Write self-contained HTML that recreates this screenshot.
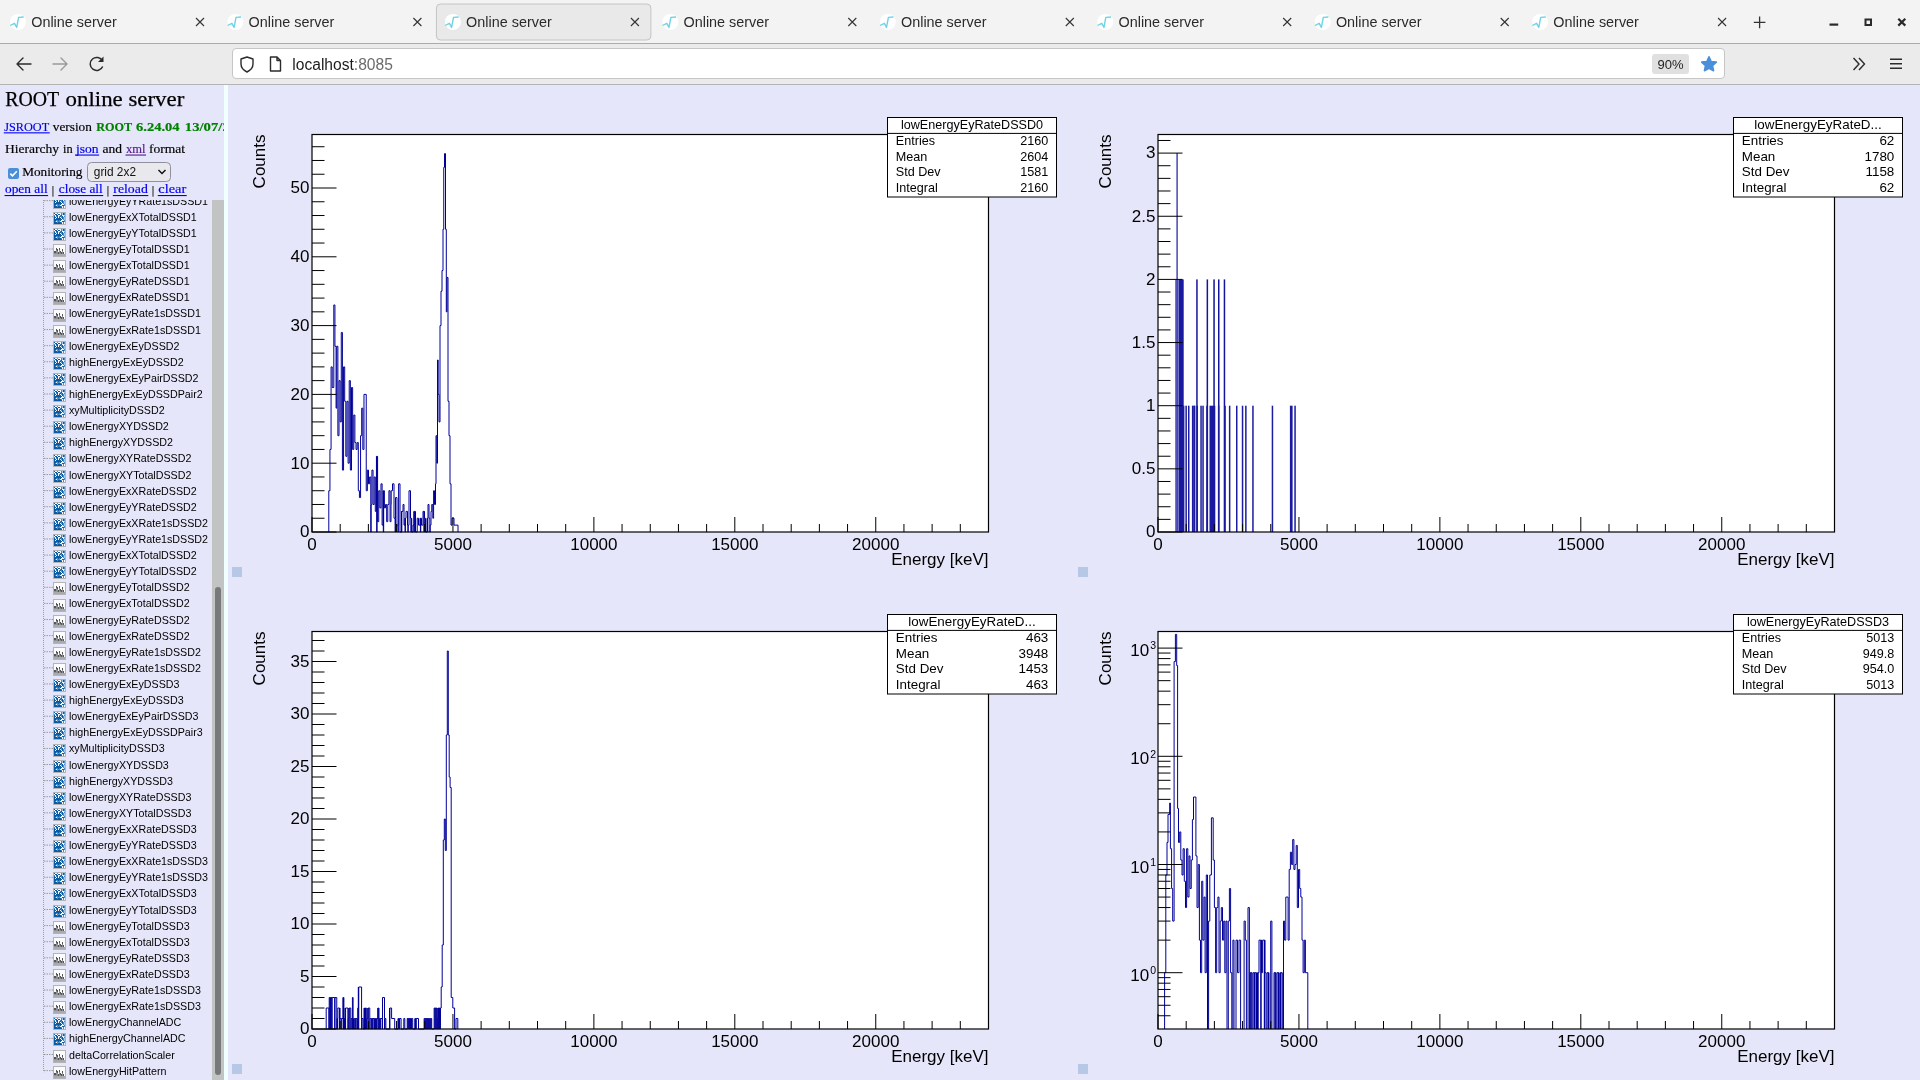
<!DOCTYPE html><html><head><meta charset="utf-8"><title>Online server</title><style>
html,body{margin:0;padding:0;width:1920px;height:1080px;overflow:hidden;background:#e6e6fa;}
body{position:relative;font-family:"Liberation Sans",sans-serif;}
.a{position:absolute;white-space:nowrap;}
#tabbar{position:absolute;left:0;top:0;width:1920px;height:43px;background:#f3f3f3;border-bottom:1px solid #ababab;}
#navbar{position:absolute;left:0;top:44px;width:1920px;height:40px;background:#ebebeb;border-bottom:1px solid #b4b4b4;}
.tabt{position:absolute;top:12.7px;font-size:14.4px;color:#2b2b2b;line-height:18px;}
#url{position:absolute;left:232px;top:48px;width:1491px;height:29px;background:#fff;border:1px solid #c6c6c6;border-radius:4px;}
#left{position:absolute;left:0;top:85px;width:224px;height:995px;overflow:hidden;background:#e6e6fa;font-family:"Liberation Serif",serif;}
#sep{position:absolute;left:224px;top:85px;width:4px;height:995px;background:#f0ffff;}
.ser{font-family:"Liberation Serif",serif;}
a.l{color:#0000ee;text-decoration:underline;}
a.v{color:#551a8b;text-decoration:underline;}
.ti{position:absolute;left:69px;font-size:10.7px;color:#000;line-height:13px;font-family:"Liberation Sans",sans-serif;}
</style></head><body><div id="root" style="position:absolute;left:0;top:0;width:1920px;height:1080px;overflow:hidden;will-change:transform">
<div id="tabbar"></div>
<svg class="a" style="left:0;top:0" width="1920" height="44" viewBox="0 0 1920 44"><rect x="436.4" y="4" width="214.5" height="36" rx="4" ry="4" fill="#e9e9e9" stroke="#c4c4c4" stroke-width="1"/><circle cx="18.0" cy="22" r="8" fill="#fff"/><path d="M10.2,25.5 L14.5,23.3 L16.7,27.4 L18.6,17.4 L23.7,17" fill="none" stroke="#6cd3e8" stroke-width="1.4" stroke-linejoin="round"/><path d="M196.0,18 L204.0,26 M204.0,18 L196.0,26" stroke="#333" stroke-width="1.1"/><circle cx="235.4" cy="22" r="8" fill="#fff"/><path d="M227.6,25.5 L231.9,23.3 L234.1,27.4 L236.0,17.4 L241.1,17" fill="none" stroke="#6cd3e8" stroke-width="1.4" stroke-linejoin="round"/><path d="M413.4,18 L421.4,26 M421.4,18 L413.4,26" stroke="#333" stroke-width="1.1"/><circle cx="452.9" cy="22" r="8" fill="#fff"/><path d="M445.1,25.5 L449.4,23.3 L451.6,27.4 L453.5,17.4 L458.6,17" fill="none" stroke="#6cd3e8" stroke-width="1.4" stroke-linejoin="round"/><path d="M630.9,18 L638.9,26 M638.9,18 L630.9,26" stroke="#333" stroke-width="1.1"/><circle cx="670.3" cy="22" r="8" fill="#fff"/><path d="M662.5,25.5 L666.8,23.3 L669.0,27.4 L670.9,17.4 L676.0,17" fill="none" stroke="#6cd3e8" stroke-width="1.4" stroke-linejoin="round"/><path d="M848.3,18 L856.3,26 M856.3,18 L848.3,26" stroke="#333" stroke-width="1.1"/><circle cx="887.8" cy="22" r="8" fill="#fff"/><path d="M880.0,25.5 L884.3,23.3 L886.5,27.4 L888.4,17.4 L893.5,17" fill="none" stroke="#6cd3e8" stroke-width="1.4" stroke-linejoin="round"/><path d="M1065.8,18 L1073.8,26 M1073.8,18 L1065.8,26" stroke="#333" stroke-width="1.1"/><circle cx="1105.2" cy="22" r="8" fill="#fff"/><path d="M1097.5,25.5 L1101.8,23.3 L1104.0,27.4 L1105.8,17.4 L1111.0,17" fill="none" stroke="#6cd3e8" stroke-width="1.4" stroke-linejoin="round"/><path d="M1283.2,18 L1291.2,26 M1291.2,18 L1283.2,26" stroke="#333" stroke-width="1.1"/><circle cx="1322.7" cy="22" r="8" fill="#fff"/><path d="M1314.9,25.5 L1319.2,23.3 L1321.4,27.4 L1323.3,17.4 L1328.4,17" fill="none" stroke="#6cd3e8" stroke-width="1.4" stroke-linejoin="round"/><path d="M1500.7,18 L1508.7,26 M1508.7,18 L1500.7,26" stroke="#333" stroke-width="1.1"/><circle cx="1540.1" cy="22" r="8" fill="#fff"/><path d="M1532.3,25.5 L1536.6,23.3 L1538.8,27.4 L1540.7,17.4 L1545.8,17" fill="none" stroke="#6cd3e8" stroke-width="1.4" stroke-linejoin="round"/><path d="M1718.1,18 L1726.1,26 M1726.1,18 L1718.1,26" stroke="#333" stroke-width="1.1"/><path d="M1753.8,22.4 H1765.4 M1759.6,16.6 V28.2" stroke="#333" stroke-width="1.3"/><rect x="1829.5" y="23.5" width="8.7" height="2.2" fill="#2a2a2a"/><rect x="1865.5" y="19.5" width="5.5" height="5.5" fill="none" stroke="#2a2a2a" stroke-width="2"/><path d="M1898.3,18.8 L1905.3,25.6 M1905.3,18.8 L1898.3,25.6" stroke="#2a2a2a" stroke-width="2.2"/></svg>
<div class="tabt" style="left:31.2px">Online server</div>
<div class="tabt" style="left:248.6px">Online server</div>
<div class="tabt" style="left:466.1px">Online server</div>
<div class="tabt" style="left:683.5px">Online server</div>
<div class="tabt" style="left:901.0px">Online server</div>
<div class="tabt" style="left:1118.5px">Online server</div>
<div class="tabt" style="left:1335.9px">Online server</div>
<div class="tabt" style="left:1553.3px">Online server</div>
<div id="navbar"></div>
<div id="url"></div>
<svg class="a" style="left:0;top:44px" width="1920" height="41" viewBox="0 44 1920 41"><path d="M17,64 H31 M17,64 L23,58 M17,64 L23,70" fill="none" stroke="#2b2b2b" stroke-width="1.4" stroke-linecap="round"/><path d="M53,64 H67 M67,64 L61,58 M67,64 L61,70" fill="none" stroke="#9a9a9a" stroke-width="1.4" stroke-linecap="round"/><path d="M102.5,61 A6.5,6.5 0 1 0 102.7,66.5" fill="none" stroke="#2b2b2b" stroke-width="1.5"/><path d="M103.5,56.5 L103.5,62 L98,62 Z" fill="#2b2b2b"/><path d="M247,57 L253,59 L253,64 Q253,69 247,72 Q241,69 241,64 L241,59 Z" fill="none" stroke="#2b2b2b" stroke-width="1.4" stroke-linejoin="round"/><path d="M270.5,57 H277 L280.5,60.5 V71 H270.5 Z M277,57 V60.5 H280.5" fill="none" stroke="#2b2b2b" stroke-width="1.4" stroke-linejoin="round"/><rect x="1652" y="54" width="37" height="20" rx="3" fill="#e0e0e0"/><polygon points="1709.00,56.80 1711.17,61.51 1716.32,62.12 1712.52,65.64 1713.53,70.73 1709.00,68.20 1704.47,70.73 1705.48,65.64 1701.68,62.12 1706.83,61.51" fill="#4a8fd9" stroke="#4a8fd9" stroke-width="1.6" stroke-linejoin="round"/><path d="M1853.5,58 L1859,64 L1853.5,70 M1859,58 L1864.5,64 L1859,70" fill="none" stroke="#2b2b2b" stroke-width="1.4"/><path d="M1890,59.2 H1902 M1890,63.7 H1902 M1890,68.2 H1902" stroke="#2b2b2b" stroke-width="1.4"/></svg>
<div class="a" style="left:292.3px;top:55.5px;font-size:15.6px;line-height:18px;color:#1c1c1c">localhost<span style="color:#6b6b6b">:8085</span></div>
<div class="a" style="left:1652px;top:56px;width:37px;text-align:center;font-size:13px;line-height:18px;color:#222">90%</div>
<div id="left">
<svg class="a" style="left:0;top:-85px" width="224" height="200" viewBox="0 0 224 200"><text x="5.3" y="105.8" font-family="Liberation Serif" font-size="21.8" fill="#000" stroke="#000" stroke-width="0.25" textLength="53.9" lengthAdjust="spacingAndGlyphs">ROOT</text><text x="65.6" y="105.8" font-family="Liberation Serif" font-size="21.8" fill="#000" stroke="#000" stroke-width="0.25" textLength="118.7" lengthAdjust="spacingAndGlyphs">online server</text><text x="4.3" y="130.7" font-family="Liberation Serif" font-size="13.2" fill="#0000ee" stroke="#0000ee" stroke-width="0.18" textLength="44.9" lengthAdjust="spacingAndGlyphs">JSROOT</text><rect x="3.8" y="132.30" width="45.9" height="1.1" fill="#0000ee"/><text x="52.8" y="130.7" font-family="Liberation Serif" font-size="13.2" fill="#000" stroke="#000" stroke-width="0.18" textLength="39.1" lengthAdjust="spacingAndGlyphs">version</text><text x="96.2" y="130.7" font-family="Liberation Serif" font-size="13.2" fill="#008000" stroke="#008000" stroke-width="0.18" textLength="36.0" lengthAdjust="spacingAndGlyphs" font-weight="bold">ROOT</text><text x="136" y="130.7" font-family="Liberation Serif" font-size="13.2" fill="#008000" stroke="#008000" stroke-width="0.18" textLength="43.6" lengthAdjust="spacingAndGlyphs" font-weight="bold">6.24.04</text><text x="184.8" y="130.7" font-family="Liberation Serif" font-size="13.2" fill="#008000" stroke="#008000" stroke-width="0.18" textLength="67.0" lengthAdjust="spacingAndGlyphs" font-weight="bold">13/07/2021</text><text x="5.0" y="152.9" font-family="Liberation Serif" font-size="13.2" fill="#000" stroke="#000" stroke-width="0.18" textLength="54.0" lengthAdjust="spacingAndGlyphs">Hierarchy</text><text x="63.0" y="152.9" font-family="Liberation Serif" font-size="13.2" fill="#000" stroke="#000" stroke-width="0.18" textLength="9.6" lengthAdjust="spacingAndGlyphs">in</text><text x="76.0" y="152.9" font-family="Liberation Serif" font-size="13.2" fill="#0000ee" stroke="#0000ee" stroke-width="0.18" textLength="22.6" lengthAdjust="spacingAndGlyphs">json</text><rect x="75.5" y="154.50" width="23.6" height="1.1" fill="#0000ee"/><text x="102.6" y="152.9" font-family="Liberation Serif" font-size="13.2" fill="#000" stroke="#000" stroke-width="0.18" textLength="19.5" lengthAdjust="spacingAndGlyphs">and</text><text x="126.0" y="152.9" font-family="Liberation Serif" font-size="13.2" fill="#551a8b" stroke="#551a8b" stroke-width="0.18" textLength="19.5" lengthAdjust="spacingAndGlyphs">xml</text><rect x="125.5" y="154.50" width="20.5" height="1.1" fill="#551a8b"/><text x="149.0" y="152.9" font-family="Liberation Serif" font-size="13.2" fill="#000" stroke="#000" stroke-width="0.18" textLength="36.1" lengthAdjust="spacingAndGlyphs">format</text><text x="22.2" y="175.6" font-family="Liberation Serif" font-size="13.2" fill="#000" stroke="#000" stroke-width="0.18" textLength="60.3" lengthAdjust="spacingAndGlyphs">Monitoring</text><text x="5.0" y="193.4" font-family="Liberation Serif" font-size="13.2" fill="#0000ee" stroke="#0000ee" stroke-width="0.18" textLength="42.6" lengthAdjust="spacingAndGlyphs">open all</text><rect x="4.5" y="195.00" width="43.6" height="1.1" fill="#0000ee"/><text x="58.8" y="193.4" font-family="Liberation Serif" font-size="13.2" fill="#0000ee" stroke="#0000ee" stroke-width="0.18" textLength="43.9" lengthAdjust="spacingAndGlyphs">close all</text><rect x="58.3" y="195.00" width="44.9" height="1.1" fill="#0000ee"/><text x="113.3" y="193.4" font-family="Liberation Serif" font-size="13.2" fill="#0000ee" stroke="#0000ee" stroke-width="0.18" textLength="34.5" lengthAdjust="spacingAndGlyphs">reload</text><rect x="112.8" y="195.00" width="35.5" height="1.1" fill="#0000ee"/><text x="158.3" y="193.4" font-family="Liberation Serif" font-size="13.2" fill="#0000ee" stroke="#0000ee" stroke-width="0.18" textLength="27.9" lengthAdjust="spacingAndGlyphs">clear</text><rect x="157.8" y="195.00" width="28.9" height="1.1" fill="#0000ee"/><rect x="52.1" y="186" width="1.6" height="10.7" fill="#6e6e6e"/><rect x="107.10000000000001" y="186" width="1.6" height="10.7" fill="#6e6e6e"/><rect x="152.2" y="186" width="1.6" height="10.7" fill="#6e6e6e"/><rect x="8" y="168" width="11" height="11" rx="2" fill="#4a90d9"/><path d="M10.3,173.6 L12.5,175.9 L16.8,171.2" fill="none" stroke="#fff" stroke-width="1.6"/><rect x="87.5" y="162.5" width="83" height="19" rx="4" fill="#e9e9ed" stroke="#8f8f9d" stroke-width="1"/><text x="93.8" y="175.6" font-family="Liberation Sans" font-size="13" fill="#111" textLength="42.2" lengthAdjust="spacingAndGlyphs">grid 2x2</text><path d="M158.5,170 L162,173.6 L165.5,170" fill="none" stroke="#111" stroke-width="1.4"/></svg>
<div class="a" style="left:0;top:115px;width:224px;height:880px;overflow:hidden"><svg class="a" style="left:0;top:0" width="224" height="880"><defs><symbol id="ib" viewBox="0 0 13 13"><rect x="0.5" y="0.5" width="12" height="12" fill="#f5f9fd" stroke="#b0b4b8" stroke-width="1"/><rect x="1" y="1" width="1" height="1" fill="#0c5aa0"/><rect x="4" y="1" width="1" height="1" fill="#4a8cc4"/><rect x="8" y="1" width="1" height="1" fill="#4a8cc4"/><rect x="9" y="1" width="1" height="1" fill="#a6c6e3"/><rect x="10" y="1" width="1" height="1" fill="#0c5aa0"/><rect x="11" y="1" width="1" height="1" fill="#4a8cc4"/><rect x="2" y="2" width="1" height="1" fill="#0c5aa0"/><rect x="3" y="2" width="1" height="1" fill="#0c5aa0"/><rect x="5" y="2" width="1" height="1" fill="#0c5aa0"/><rect x="6" y="2" width="1" height="1" fill="#0c5aa0"/><rect x="8" y="2" width="1" height="1" fill="#4a8cc4"/><rect x="9" y="2" width="1" height="1" fill="#a6c6e3"/><rect x="10" y="2" width="1" height="1" fill="#0c5aa0"/><rect x="11" y="2" width="1" height="1" fill="#4a8cc4"/><rect x="1" y="3" width="1" height="1" fill="#4a8cc4"/><rect x="3" y="3" width="1" height="1" fill="#0c5aa0"/><rect x="4" y="3" width="1" height="1" fill="#0c5aa0"/><rect x="7" y="3" width="1" height="1" fill="#4a8cc4"/><rect x="8" y="3" width="1" height="1" fill="#0c5aa0"/><rect x="11" y="3" width="1" height="1" fill="#a6c6e3"/><rect x="1" y="4" width="1" height="1" fill="#0c5aa0"/><rect x="3" y="4" width="1" height="1" fill="#4a8cc4"/><rect x="4" y="4" width="1" height="1" fill="#0c5aa0"/><rect x="6" y="4" width="1" height="1" fill="#4a8cc4"/><rect x="7" y="4" width="1" height="1" fill="#0c5aa0"/><rect x="8" y="4" width="1" height="1" fill="#4a8cc4"/><rect x="9" y="4" width="1" height="1" fill="#0c5aa0"/><rect x="11" y="4" width="1" height="1" fill="#4a8cc4"/><rect x="1" y="5" width="1" height="1" fill="#0c5aa0"/><rect x="2" y="5" width="1" height="1" fill="#0c5aa0"/><rect x="4" y="5" width="1" height="1" fill="#0c5aa0"/><rect x="6" y="5" width="1" height="1" fill="#0c5aa0"/><rect x="8" y="5" width="1" height="1" fill="#4a8cc4"/><rect x="9" y="5" width="1" height="1" fill="#0c5aa0"/><rect x="10" y="5" width="1" height="1" fill="#4a8cc4"/><rect x="11" y="5" width="1" height="1" fill="#a6c6e3"/><rect x="1" y="6" width="1" height="1" fill="#0c5aa0"/><rect x="3" y="6" width="1" height="1" fill="#0c5aa0"/><rect x="4" y="6" width="1" height="1" fill="#0c5aa0"/><rect x="5" y="6" width="1" height="1" fill="#0c5aa0"/><rect x="6" y="6" width="1" height="1" fill="#0c5aa0"/><rect x="7" y="6" width="1" height="1" fill="#0c5aa0"/><rect x="9" y="6" width="1" height="1" fill="#0c5aa0"/><rect x="10" y="6" width="1" height="1" fill="#4a8cc4"/><rect x="11" y="6" width="1" height="1" fill="#a6c6e3"/><rect x="1" y="7" width="1" height="1" fill="#0c5aa0"/><rect x="2" y="7" width="1" height="1" fill="#0c5aa0"/><rect x="3" y="7" width="1" height="1" fill="#0c5aa0"/><rect x="4" y="7" width="1" height="1" fill="#0c5aa0"/><rect x="5" y="7" width="1" height="1" fill="#0c5aa0"/><rect x="6" y="7" width="1" height="1" fill="#0c5aa0"/><rect x="7" y="7" width="1" height="1" fill="#0c5aa0"/><rect x="8" y="7" width="1" height="1" fill="#0c5aa0"/><rect x="10" y="7" width="1" height="1" fill="#4a8cc4"/><rect x="11" y="7" width="1" height="1" fill="#a6c6e3"/><rect x="1" y="8" width="1" height="1" fill="#0c5aa0"/><rect x="2" y="8" width="1" height="1" fill="#0c5aa0"/><rect x="3" y="8" width="1" height="1" fill="#4a8cc4"/><rect x="4" y="8" width="1" height="1" fill="#4a8cc4"/><rect x="5" y="8" width="1" height="1" fill="#0c5aa0"/><rect x="6" y="8" width="1" height="1" fill="#4a8cc4"/><rect x="7" y="8" width="1" height="1" fill="#0c5aa0"/><rect x="11" y="8" width="1" height="1" fill="#4a8cc4"/><rect x="1" y="9" width="1" height="1" fill="#0c5aa0"/><rect x="2" y="9" width="1" height="1" fill="#4a8cc4"/><rect x="4" y="9" width="1" height="1" fill="#4a8cc4"/><rect x="5" y="9" width="1" height="1" fill="#4a8cc4"/><rect x="6" y="9" width="1" height="1" fill="#4a8cc4"/><rect x="9" y="9" width="1" height="1" fill="#0c5aa0"/><rect x="10" y="9" width="1" height="1" fill="#0c5aa0"/><rect x="11" y="9" width="1" height="1" fill="#4a8cc4"/><rect x="1" y="10" width="1" height="1" fill="#0c5aa0"/><rect x="2" y="10" width="1" height="1" fill="#0c5aa0"/><rect x="3" y="10" width="1" height="1" fill="#0c5aa0"/><rect x="4" y="10" width="1" height="1" fill="#4a8cc4"/><rect x="5" y="10" width="1" height="1" fill="#0c5aa0"/><rect x="6" y="10" width="1" height="1" fill="#0c5aa0"/><rect x="7" y="10" width="1" height="1" fill="#0c5aa0"/><rect x="8" y="10" width="1" height="1" fill="#4a8cc4"/><rect x="10" y="10" width="1" height="1" fill="#4a8cc4"/><rect x="1" y="11" width="1" height="1" fill="#0c5aa0"/><rect x="2" y="11" width="1" height="1" fill="#0c5aa0"/><rect x="3" y="11" width="1" height="1" fill="#0c5aa0"/><rect x="4" y="11" width="1" height="1" fill="#0c5aa0"/><rect x="5" y="11" width="1" height="1" fill="#0c5aa0"/><rect x="6" y="11" width="1" height="1" fill="#0c5aa0"/><rect x="7" y="11" width="1" height="1" fill="#0c5aa0"/><rect x="8" y="11" width="1" height="1" fill="#0c5aa0"/><rect x="10" y="11" width="1" height="1" fill="#4a8cc4"/></symbol><symbol id="ig" viewBox="0 0 13 13"><rect x="0.5" y="0.5" width="12" height="12" fill="#fbfbfb" stroke="#b4b4b4" stroke-width="1"/><rect x="1" y="7" width="1" height="5" fill="#8e9094"/><rect x="1" y="7" width="1" height="2" fill="#55565a"/><rect x="2" y="7" width="1" height="5" fill="#8e9094"/><rect x="2" y="7" width="1" height="2" fill="#55565a"/><rect x="3" y="4" width="1" height="8" fill="#8e9094"/><rect x="3" y="4" width="1" height="2" fill="#55565a"/><rect x="4" y="5" width="1" height="7" fill="#8e9094"/><rect x="4" y="5" width="1" height="2" fill="#55565a"/><rect x="5" y="8" width="1" height="4" fill="#8e9094"/><rect x="5" y="8" width="1" height="2" fill="#55565a"/><rect x="6" y="4" width="1" height="8" fill="#8e9094"/><rect x="6" y="4" width="1" height="2" fill="#55565a"/><rect x="7" y="7" width="1" height="5" fill="#8e9094"/><rect x="7" y="7" width="1" height="2" fill="#55565a"/><rect x="8" y="8" width="1" height="4" fill="#8e9094"/><rect x="8" y="8" width="1" height="2" fill="#55565a"/><rect x="9" y="5" width="1" height="7" fill="#8e9094"/><rect x="9" y="5" width="1" height="2" fill="#55565a"/><rect x="10" y="8" width="1" height="4" fill="#8e9094"/><rect x="10" y="8" width="1" height="2" fill="#55565a"/><rect x="11" y="10" width="1" height="2" fill="#8e9094"/><rect x="11" y="10" width="1" height="2" fill="#55565a"/><rect x="1" y="10" width="11" height="2" fill="#a8aaae"/></symbol></defs><line x1="43.5" y1="0" x2="43.5" y2="872.2" stroke="#9c9c9c" stroke-width="1" stroke-dasharray="1,1"/><line x1="44" y1="0.67" x2="53" y2="0.67" stroke="#9a9a9a" stroke-width="1" stroke-dasharray="1.5,1"/><use href="#ib" x="53" y="-4.00" width="13" height="13"/><line x1="44" y1="16.78" x2="53" y2="16.78" stroke="#9a9a9a" stroke-width="1" stroke-dasharray="1.5,1"/><use href="#ib" x="53" y="12.00" width="13" height="13"/><line x1="44" y1="32.89" x2="53" y2="32.89" stroke="#9a9a9a" stroke-width="1" stroke-dasharray="1.5,1"/><use href="#ib" x="53" y="28.00" width="13" height="13"/><line x1="44" y1="49.00" x2="53" y2="49.00" stroke="#9a9a9a" stroke-width="1" stroke-dasharray="1.5,1"/><use href="#ig" x="53" y="44.00" width="13" height="13"/><line x1="44" y1="65.11" x2="53" y2="65.11" stroke="#9a9a9a" stroke-width="1" stroke-dasharray="1.5,1"/><use href="#ig" x="53" y="60.00" width="13" height="13"/><line x1="44" y1="81.22" x2="53" y2="81.22" stroke="#9a9a9a" stroke-width="1" stroke-dasharray="1.5,1"/><use href="#ig" x="53" y="76.00" width="13" height="13"/><line x1="44" y1="97.33" x2="53" y2="97.33" stroke="#9a9a9a" stroke-width="1" stroke-dasharray="1.5,1"/><use href="#ig" x="53" y="92.00" width="13" height="13"/><line x1="44" y1="113.44" x2="53" y2="113.44" stroke="#9a9a9a" stroke-width="1" stroke-dasharray="1.5,1"/><use href="#ig" x="53" y="109.00" width="13" height="13"/><line x1="44" y1="129.55" x2="53" y2="129.55" stroke="#9a9a9a" stroke-width="1" stroke-dasharray="1.5,1"/><use href="#ig" x="53" y="125.00" width="13" height="13"/><line x1="44" y1="145.66" x2="53" y2="145.66" stroke="#9a9a9a" stroke-width="1" stroke-dasharray="1.5,1"/><use href="#ib" x="53" y="141.00" width="13" height="13"/><line x1="44" y1="161.77" x2="53" y2="161.77" stroke="#9a9a9a" stroke-width="1" stroke-dasharray="1.5,1"/><use href="#ib" x="53" y="157.00" width="13" height="13"/><line x1="44" y1="177.88" x2="53" y2="177.88" stroke="#9a9a9a" stroke-width="1" stroke-dasharray="1.5,1"/><use href="#ib" x="53" y="173.00" width="13" height="13"/><line x1="44" y1="193.99" x2="53" y2="193.99" stroke="#9a9a9a" stroke-width="1" stroke-dasharray="1.5,1"/><use href="#ib" x="53" y="189.00" width="13" height="13"/><line x1="44" y1="210.10" x2="53" y2="210.10" stroke="#9a9a9a" stroke-width="1" stroke-dasharray="1.5,1"/><use href="#ib" x="53" y="205.00" width="13" height="13"/><line x1="44" y1="226.21" x2="53" y2="226.21" stroke="#9a9a9a" stroke-width="1" stroke-dasharray="1.5,1"/><use href="#ib" x="53" y="221.00" width="13" height="13"/><line x1="44" y1="242.32" x2="53" y2="242.32" stroke="#9a9a9a" stroke-width="1" stroke-dasharray="1.5,1"/><use href="#ib" x="53" y="237.00" width="13" height="13"/><line x1="44" y1="258.43" x2="53" y2="258.43" stroke="#9a9a9a" stroke-width="1" stroke-dasharray="1.5,1"/><use href="#ib" x="53" y="254.00" width="13" height="13"/><line x1="44" y1="274.54" x2="53" y2="274.54" stroke="#9a9a9a" stroke-width="1" stroke-dasharray="1.5,1"/><use href="#ib" x="53" y="270.00" width="13" height="13"/><line x1="44" y1="290.65" x2="53" y2="290.65" stroke="#9a9a9a" stroke-width="1" stroke-dasharray="1.5,1"/><use href="#ib" x="53" y="286.00" width="13" height="13"/><line x1="44" y1="306.76" x2="53" y2="306.76" stroke="#9a9a9a" stroke-width="1" stroke-dasharray="1.5,1"/><use href="#ib" x="53" y="302.00" width="13" height="13"/><line x1="44" y1="322.87" x2="53" y2="322.87" stroke="#9a9a9a" stroke-width="1" stroke-dasharray="1.5,1"/><use href="#ib" x="53" y="318.00" width="13" height="13"/><line x1="44" y1="338.98" x2="53" y2="338.98" stroke="#9a9a9a" stroke-width="1" stroke-dasharray="1.5,1"/><use href="#ib" x="53" y="334.00" width="13" height="13"/><line x1="44" y1="355.09" x2="53" y2="355.09" stroke="#9a9a9a" stroke-width="1" stroke-dasharray="1.5,1"/><use href="#ib" x="53" y="350.00" width="13" height="13"/><line x1="44" y1="371.20" x2="53" y2="371.20" stroke="#9a9a9a" stroke-width="1" stroke-dasharray="1.5,1"/><use href="#ib" x="53" y="366.00" width="13" height="13"/><line x1="44" y1="387.31" x2="53" y2="387.31" stroke="#9a9a9a" stroke-width="1" stroke-dasharray="1.5,1"/><use href="#ig" x="53" y="382.00" width="13" height="13"/><line x1="44" y1="403.42" x2="53" y2="403.42" stroke="#9a9a9a" stroke-width="1" stroke-dasharray="1.5,1"/><use href="#ig" x="53" y="399.00" width="13" height="13"/><line x1="44" y1="419.53" x2="53" y2="419.53" stroke="#9a9a9a" stroke-width="1" stroke-dasharray="1.5,1"/><use href="#ig" x="53" y="415.00" width="13" height="13"/><line x1="44" y1="435.64" x2="53" y2="435.64" stroke="#9a9a9a" stroke-width="1" stroke-dasharray="1.5,1"/><use href="#ig" x="53" y="431.00" width="13" height="13"/><line x1="44" y1="451.75" x2="53" y2="451.75" stroke="#9a9a9a" stroke-width="1" stroke-dasharray="1.5,1"/><use href="#ig" x="53" y="447.00" width="13" height="13"/><line x1="44" y1="467.86" x2="53" y2="467.86" stroke="#9a9a9a" stroke-width="1" stroke-dasharray="1.5,1"/><use href="#ig" x="53" y="463.00" width="13" height="13"/><line x1="44" y1="483.97" x2="53" y2="483.97" stroke="#9a9a9a" stroke-width="1" stroke-dasharray="1.5,1"/><use href="#ib" x="53" y="479.00" width="13" height="13"/><line x1="44" y1="500.08" x2="53" y2="500.08" stroke="#9a9a9a" stroke-width="1" stroke-dasharray="1.5,1"/><use href="#ib" x="53" y="495.00" width="13" height="13"/><line x1="44" y1="516.19" x2="53" y2="516.19" stroke="#9a9a9a" stroke-width="1" stroke-dasharray="1.5,1"/><use href="#ib" x="53" y="511.00" width="13" height="13"/><line x1="44" y1="532.30" x2="53" y2="532.30" stroke="#9a9a9a" stroke-width="1" stroke-dasharray="1.5,1"/><use href="#ib" x="53" y="527.00" width="13" height="13"/><line x1="44" y1="548.41" x2="53" y2="548.41" stroke="#9a9a9a" stroke-width="1" stroke-dasharray="1.5,1"/><use href="#ib" x="53" y="544.00" width="13" height="13"/><line x1="44" y1="564.52" x2="53" y2="564.52" stroke="#9a9a9a" stroke-width="1" stroke-dasharray="1.5,1"/><use href="#ib" x="53" y="560.00" width="13" height="13"/><line x1="44" y1="580.63" x2="53" y2="580.63" stroke="#9a9a9a" stroke-width="1" stroke-dasharray="1.5,1"/><use href="#ib" x="53" y="576.00" width="13" height="13"/><line x1="44" y1="596.74" x2="53" y2="596.74" stroke="#9a9a9a" stroke-width="1" stroke-dasharray="1.5,1"/><use href="#ib" x="53" y="592.00" width="13" height="13"/><line x1="44" y1="612.85" x2="53" y2="612.85" stroke="#9a9a9a" stroke-width="1" stroke-dasharray="1.5,1"/><use href="#ib" x="53" y="608.00" width="13" height="13"/><line x1="44" y1="628.96" x2="53" y2="628.96" stroke="#9a9a9a" stroke-width="1" stroke-dasharray="1.5,1"/><use href="#ib" x="53" y="624.00" width="13" height="13"/><line x1="44" y1="645.07" x2="53" y2="645.07" stroke="#9a9a9a" stroke-width="1" stroke-dasharray="1.5,1"/><use href="#ib" x="53" y="640.00" width="13" height="13"/><line x1="44" y1="661.18" x2="53" y2="661.18" stroke="#9a9a9a" stroke-width="1" stroke-dasharray="1.5,1"/><use href="#ib" x="53" y="656.00" width="13" height="13"/><line x1="44" y1="677.29" x2="53" y2="677.29" stroke="#9a9a9a" stroke-width="1" stroke-dasharray="1.5,1"/><use href="#ib" x="53" y="672.00" width="13" height="13"/><line x1="44" y1="693.40" x2="53" y2="693.40" stroke="#9a9a9a" stroke-width="1" stroke-dasharray="1.5,1"/><use href="#ib" x="53" y="688.00" width="13" height="13"/><line x1="44" y1="709.51" x2="53" y2="709.51" stroke="#9a9a9a" stroke-width="1" stroke-dasharray="1.5,1"/><use href="#ib" x="53" y="705.00" width="13" height="13"/><line x1="44" y1="725.62" x2="53" y2="725.62" stroke="#9a9a9a" stroke-width="1" stroke-dasharray="1.5,1"/><use href="#ig" x="53" y="721.00" width="13" height="13"/><line x1="44" y1="741.73" x2="53" y2="741.73" stroke="#9a9a9a" stroke-width="1" stroke-dasharray="1.5,1"/><use href="#ig" x="53" y="737.00" width="13" height="13"/><line x1="44" y1="757.84" x2="53" y2="757.84" stroke="#9a9a9a" stroke-width="1" stroke-dasharray="1.5,1"/><use href="#ig" x="53" y="753.00" width="13" height="13"/><line x1="44" y1="773.95" x2="53" y2="773.95" stroke="#9a9a9a" stroke-width="1" stroke-dasharray="1.5,1"/><use href="#ig" x="53" y="769.00" width="13" height="13"/><line x1="44" y1="790.06" x2="53" y2="790.06" stroke="#9a9a9a" stroke-width="1" stroke-dasharray="1.5,1"/><use href="#ig" x="53" y="785.00" width="13" height="13"/><line x1="44" y1="806.17" x2="53" y2="806.17" stroke="#9a9a9a" stroke-width="1" stroke-dasharray="1.5,1"/><use href="#ig" x="53" y="801.00" width="13" height="13"/><line x1="44" y1="822.28" x2="53" y2="822.28" stroke="#9a9a9a" stroke-width="1" stroke-dasharray="1.5,1"/><use href="#ib" x="53" y="817.00" width="13" height="13"/><line x1="44" y1="838.39" x2="53" y2="838.39" stroke="#9a9a9a" stroke-width="1" stroke-dasharray="1.5,1"/><use href="#ib" x="53" y="833.00" width="13" height="13"/><line x1="44" y1="854.50" x2="53" y2="854.50" stroke="#9a9a9a" stroke-width="1" stroke-dasharray="1.5,1"/><use href="#ig" x="53" y="850.00" width="13" height="13"/><line x1="44" y1="870.61" x2="53" y2="870.61" stroke="#9a9a9a" stroke-width="1" stroke-dasharray="1.5,1"/><use href="#ig" x="53" y="866.00" width="13" height="13"/></svg><div class="ti" style="top:-5.33px">lowEnergyEyYRate1sDSSD1</div><div class="ti" style="top:10.78px">lowEnergyExXTotalDSSD1</div><div class="ti" style="top:26.89px">lowEnergyEyYTotalDSSD1</div><div class="ti" style="top:43.00px">lowEnergyEyTotalDSSD1</div><div class="ti" style="top:59.11px">lowEnergyExTotalDSSD1</div><div class="ti" style="top:75.22px">lowEnergyEyRateDSSD1</div><div class="ti" style="top:91.33px">lowEnergyExRateDSSD1</div><div class="ti" style="top:107.44px">lowEnergyEyRate1sDSSD1</div><div class="ti" style="top:123.55px">lowEnergyExRate1sDSSD1</div><div class="ti" style="top:139.66px">lowEnergyExEyDSSD2</div><div class="ti" style="top:155.77px">highEnergyExEyDSSD2</div><div class="ti" style="top:171.88px">lowEnergyExEyPairDSSD2</div><div class="ti" style="top:187.99px">highEnergyExEyDSSDPair2</div><div class="ti" style="top:204.10px">xyMultiplicityDSSD2</div><div class="ti" style="top:220.21px">lowEnergyXYDSSD2</div><div class="ti" style="top:236.32px">highEnergyXYDSSD2</div><div class="ti" style="top:252.43px">lowEnergyXYRateDSSD2</div><div class="ti" style="top:268.54px">lowEnergyXYTotalDSSD2</div><div class="ti" style="top:284.65px">lowEnergyExXRateDSSD2</div><div class="ti" style="top:300.76px">lowEnergyEyYRateDSSD2</div><div class="ti" style="top:316.87px">lowEnergyExXRate1sDSSD2</div><div class="ti" style="top:332.98px">lowEnergyEyYRate1sDSSD2</div><div class="ti" style="top:349.09px">lowEnergyExXTotalDSSD2</div><div class="ti" style="top:365.20px">lowEnergyEyYTotalDSSD2</div><div class="ti" style="top:381.31px">lowEnergyEyTotalDSSD2</div><div class="ti" style="top:397.42px">lowEnergyExTotalDSSD2</div><div class="ti" style="top:413.53px">lowEnergyEyRateDSSD2</div><div class="ti" style="top:429.64px">lowEnergyExRateDSSD2</div><div class="ti" style="top:445.75px">lowEnergyEyRate1sDSSD2</div><div class="ti" style="top:461.86px">lowEnergyExRate1sDSSD2</div><div class="ti" style="top:477.97px">lowEnergyExEyDSSD3</div><div class="ti" style="top:494.08px">highEnergyExEyDSSD3</div><div class="ti" style="top:510.19px">lowEnergyExEyPairDSSD3</div><div class="ti" style="top:526.30px">highEnergyExEyDSSDPair3</div><div class="ti" style="top:542.41px">xyMultiplicityDSSD3</div><div class="ti" style="top:558.52px">lowEnergyXYDSSD3</div><div class="ti" style="top:574.63px">highEnergyXYDSSD3</div><div class="ti" style="top:590.74px">lowEnergyXYRateDSSD3</div><div class="ti" style="top:606.85px">lowEnergyXYTotalDSSD3</div><div class="ti" style="top:622.96px">lowEnergyExXRateDSSD3</div><div class="ti" style="top:639.07px">lowEnergyEyYRateDSSD3</div><div class="ti" style="top:655.18px">lowEnergyExXRate1sDSSD3</div><div class="ti" style="top:671.29px">lowEnergyEyYRate1sDSSD3</div><div class="ti" style="top:687.40px">lowEnergyExXTotalDSSD3</div><div class="ti" style="top:703.51px">lowEnergyEyYTotalDSSD3</div><div class="ti" style="top:719.62px">lowEnergyEyTotalDSSD3</div><div class="ti" style="top:735.73px">lowEnergyExTotalDSSD3</div><div class="ti" style="top:751.84px">lowEnergyEyRateDSSD3</div><div class="ti" style="top:767.95px">lowEnergyExRateDSSD3</div><div class="ti" style="top:784.06px">lowEnergyEyRate1sDSSD3</div><div class="ti" style="top:800.17px">lowEnergyExRate1sDSSD3</div><div class="ti" style="top:816.28px">lowEnergyChannelADC</div><div class="ti" style="top:832.39px">highEnergyChannelADC</div><div class="ti" style="top:848.50px">deltaCorrelationScaler</div><div class="ti" style="top:864.61px">lowEnergyHitPattern</div><div class="a" style="left:212px;top:0;width:12px;height:880px;background:#c2c3c3"></div><div class="a" style="left:215px;top:387px;width:6px;height:488px;background:#767a7a;border-radius:3px"></div></div>
</div>
<div id="sep"></div>
<svg class="a" style="left:0;top:0" width="1920" height="1080" viewBox="0 0 1920 1080"><rect x="312" y="134.5" width="676.5" height="397.5" fill="#fff"/><path d="M328.81,532.00V490.72H329.94V449.44H331.07V366.88H332.21V387.52H333.80V304.96H334.93V346.24H336.07V408.16H336.75V346.24H337.88V435.68H339.01V380.64H340.15V421.92H341.28V332.48H342.42V470.08H343.55V366.88H344.69V401.28H345.82V456.32H346.95V401.28H348.09V463.20H349.22V380.64H350.36V470.08H351.49V387.52H352.63V449.44H353.76V415.04H354.89V442.56H356.03V449.44H357.16V442.56H358.30V490.72H359.43V497.60H360.57V435.68H361.70V408.16H362.83V449.44H363.97V394.40H366.24V490.72H367.37V470.08H368.51V483.84H369.64V476.96H370.77V504.48H370.79V532.00H371.14V504.48H371.91V470.08H373.04V504.48H374.18V476.96H375.31V511.36H376.45V456.32H376.70V532.00H377.05V456.32H377.58V521.68H378.72V490.72H379.85V507.92H380.98V483.84H382.12V525.12H383.25V490.72H383.31V532.00H383.66V490.72H384.39V507.92H385.52V504.48H386.66V521.68H387.79V504.48H388.92V490.72H390.06V521.68H391.00V504.48H391.19V490.72H392.50V483.84H394.00V518.24H395.12V532.00H395.47V518.24H395.50V497.60H397.00V525.12H397.96V532.00H398.31V525.12H398.60V483.84H400.00V532.00H401.50V511.36H401.50V532.00H401.85V511.36H403.00V504.48H404.00V525.12H405.00V518.24H405.05V532.00H405.40V518.24H406.00V511.36H407.50V525.12H407.88V532.00H408.23V525.12H409.00V490.72H410.50V518.24H410.95V532.00H411.30V518.24H411.75V532.00H413.00V525.12H414.00V511.36H414.02V532.00H414.37V511.36H415.50V532.00H417.21V518.24H418.50V525.12H420.00V518.24H420.40V532.00H420.75V518.24H421.50V525.12H423.00V511.36H423.95V532.00H424.30V511.36H424.50V518.24H425.50V532.00H427.00V518.24H427.49V532.00H427.84V518.24H428.00V504.48H429.00V518.24H429.85V532.00H430.20V525.12H431.00V511.36H431.75V504.48H432.80V518.24H433.60V490.72H434.50V504.48H435.50V483.84H436.00V435.68H436.80V463.20H437.50V360.00H438.20V394.40H439.00V421.92H440.00V325.60H441.00V291.20H442.00V270.56H443.00V229.28H443.75V167.36H444.50V153.60H445.50V229.28H446.30V311.84H447.00V277.44H448.00V401.28H449.00V435.68H450.00V483.84H451.00V525.12H452.00V518.24H454.00V525.12H458.00V532.00" fill="none" stroke="#000099" stroke-width="1"/><rect x="312" y="134.5" width="676.5" height="397.5" fill="none" stroke="#000" stroke-width="1.2"/><path d="M312.00,532V517M340.19,532V524M368.38,532V524M396.56,532V524M424.75,532V524M452.94,532V517M481.12,532V524M509.31,532V524M537.50,532V524M565.69,532V524M593.88,532V517M622.06,532V524M650.25,532V524M678.44,532V524M706.62,532V524M734.81,532V517M763.00,532V524M791.19,532V524M819.38,532V524M847.56,532V524M875.75,532V517M903.94,532V524M932.12,532V524M960.31,532V524M988.50,532V524M312,532.00H336.5M312,463.20H336.5M312,394.40H336.5M312,325.60H336.5M312,256.80H336.5M312,188.00H336.5M312,518.24H324.5M312,504.48H324.5M312,490.72H324.5M312,476.96H324.5M312,449.44H324.5M312,435.68H324.5M312,421.92H324.5M312,408.16H324.5M312,380.64H324.5M312,366.88H324.5M312,353.12H324.5M312,339.36H324.5M312,311.84H324.5M312,298.08H324.5M312,284.32H324.5M312,270.56H324.5M312,243.04H324.5M312,229.28H324.5M312,215.52H324.5M312,201.76H324.5M312,174.24H324.5M312,160.48H324.5M312,146.72H324.5" stroke="#000" stroke-width="1" fill="none"/><text x="312.00" y="550.2" text-anchor="middle" font-family="Liberation Sans" font-size="17">0</text><text x="452.94" y="550.2" text-anchor="middle" font-family="Liberation Sans" font-size="17">5000</text><text x="593.88" y="550.2" text-anchor="middle" font-family="Liberation Sans" font-size="17">10000</text><text x="734.81" y="550.2" text-anchor="middle" font-family="Liberation Sans" font-size="17">15000</text><text x="875.75" y="550.2" text-anchor="middle" font-family="Liberation Sans" font-size="17">20000</text><text x="988.5" y="565.0" text-anchor="end" font-family="Liberation Sans" font-size="17">Energy [keV]</text><text x="309.4" y="537.30" text-anchor="end" font-family="Liberation Sans" font-size="17">0</text><text x="309.4" y="468.50" text-anchor="end" font-family="Liberation Sans" font-size="17">10</text><text x="309.4" y="399.70" text-anchor="end" font-family="Liberation Sans" font-size="17">20</text><text x="309.4" y="330.90" text-anchor="end" font-family="Liberation Sans" font-size="17">30</text><text x="309.4" y="262.10" text-anchor="end" font-family="Liberation Sans" font-size="17">40</text><text x="309.4" y="193.30" text-anchor="end" font-family="Liberation Sans" font-size="17">50</text><text transform="translate(265,134.5) rotate(-90)" text-anchor="end" font-family="Liberation Sans" font-size="17">Counts</text><rect x="887.5" y="117.5" width="169.0" height="79.5" fill="#fff" stroke="#000" stroke-width="1"/><path d="M887.5,133.4H1056.5" stroke="#000" stroke-width="1"/><text transform="translate(972.00,129.40) scale(1.0,1)" text-anchor="middle" font-family="Liberation Sans" font-size="12.6">lowEnergyEyRateDSSD0</text><text transform="translate(895.80,144.70) scale(1.0,1)" font-family="Liberation Sans" font-size="12.6">Entries</text><text transform="translate(1048.30,144.70) scale(1.0,1)" text-anchor="end" font-family="Liberation Sans" font-size="12.6">2160</text><text transform="translate(895.80,160.80) scale(1.0,1)" font-family="Liberation Sans" font-size="12.6">Mean</text><text transform="translate(1048.30,160.80) scale(1.0,1)" text-anchor="end" font-family="Liberation Sans" font-size="12.6">2604</text><text transform="translate(895.80,175.70) scale(1.0,1)" font-family="Liberation Sans" font-size="12.6">Std Dev</text><text transform="translate(1048.30,175.70) scale(1.0,1)" text-anchor="end" font-family="Liberation Sans" font-size="12.6">1581</text><text transform="translate(895.80,191.90) scale(1.0,1)" font-family="Liberation Sans" font-size="12.6">Integral</text><text transform="translate(1048.30,191.90) scale(1.0,1)" text-anchor="end" font-family="Liberation Sans" font-size="12.6">2160</text><rect x="232" y="567" width="10" height="10" fill="#b6c8e6"/><rect x="1158" y="134.5" width="676.5" height="397.5" fill="#fff"/><rect x="1175" y="279.40" width="4" height="252.60" fill="#7676c6"/><rect x="1179" y="279.40" width="4.7" height="252.60" fill="#1a1aa0"/><rect x="1176.4" y="153.10" width="1.4" height="378.90" fill="#3a3ab0"/><rect x="1196.20" y="279.40" width="1.5" height="252.60" fill="#14149c"/><rect x="1206.60" y="279.40" width="1.5" height="252.60" fill="#14149c"/><rect x="1213.30" y="279.40" width="1.5" height="252.60" fill="#14149c"/><rect x="1218.00" y="279.40" width="1.5" height="252.60" fill="#14149c"/><rect x="1223.70" y="279.40" width="1.5" height="252.60" fill="#14149c"/><rect x="1182.90" y="405.70" width="1.5" height="126.30" fill="#1c1ca0"/><rect x="1185.40" y="405.70" width="1.5" height="126.30" fill="#1c1ca0"/><rect x="1188.00" y="405.70" width="1.5" height="126.30" fill="#1c1ca0"/><rect x="1191.90" y="405.70" width="1.5" height="126.30" fill="#1c1ca0"/><rect x="1193.20" y="405.70" width="1.5" height="126.30" fill="#1c1ca0"/><rect x="1193.90" y="405.70" width="1.5" height="126.30" fill="#1c1ca0"/><rect x="1196.50" y="405.70" width="1.5" height="126.30" fill="#1c1ca0"/><rect x="1200.30" y="405.70" width="1.5" height="126.30" fill="#1c1ca0"/><rect x="1202.30" y="405.70" width="1.5" height="126.30" fill="#1c1ca0"/><rect x="1206.20" y="405.70" width="1.5" height="126.30" fill="#1c1ca0"/><rect x="1217.90" y="405.70" width="1.5" height="126.30" fill="#1c1ca0"/><rect x="1224.30" y="405.70" width="1.5" height="126.30" fill="#1c1ca0"/><rect x="1228.90" y="405.70" width="1.5" height="126.30" fill="#1c1ca0"/><rect x="1236.00" y="405.70" width="1.5" height="126.30" fill="#1c1ca0"/><rect x="1241.80" y="405.70" width="1.5" height="126.30" fill="#1c1ca0"/><rect x="1245.10" y="405.70" width="1.5" height="126.30" fill="#1c1ca0"/><rect x="1252.20" y="405.70" width="1.5" height="126.30" fill="#1c1ca0"/><rect x="1271.70" y="405.70" width="1.5" height="126.30" fill="#1c1ca0"/><rect x="1294.30" y="405.70" width="1.5" height="126.30" fill="#1c1ca0"/><rect x="1209.5" y="405.70" width="5.80" height="126.30" fill="#1a1aa0"/><rect x="1289.9" y="405.70" width="2.70" height="126.30" fill="#1a1aa0"/><rect x="1158" y="134.5" width="676.5" height="397.5" fill="none" stroke="#000" stroke-width="1.2"/><path d="M1158.00,532V517M1186.19,532V524M1214.38,532V524M1242.56,532V524M1270.75,532V524M1298.94,532V517M1327.12,532V524M1355.31,532V524M1383.50,532V524M1411.69,532V524M1439.88,532V517M1468.06,532V524M1496.25,532V524M1524.44,532V524M1552.62,532V524M1580.81,532V517M1609.00,532V524M1637.19,532V524M1665.38,532V524M1693.56,532V524M1721.75,532V517M1749.94,532V524M1778.12,532V524M1806.31,532V524M1834.50,532V524M1158,532.00H1182.5M1158,468.85H1182.5M1158,405.70H1182.5M1158,342.55H1182.5M1158,279.40H1182.5M1158,216.25H1182.5M1158,153.10H1182.5M1158,519.37H1170.5M1158,506.74H1170.5M1158,494.11H1170.5M1158,481.48H1170.5M1158,456.22H1170.5M1158,443.59H1170.5M1158,430.96H1170.5M1158,418.33H1170.5M1158,393.07H1170.5M1158,380.44H1170.5M1158,367.81H1170.5M1158,355.18H1170.5M1158,329.92H1170.5M1158,317.29H1170.5M1158,304.66H1170.5M1158,292.03H1170.5M1158,266.77H1170.5M1158,254.14H1170.5M1158,241.51H1170.5M1158,228.88H1170.5M1158,203.62H1170.5M1158,190.99H1170.5M1158,178.36H1170.5M1158,165.73H1170.5M1158,140.47H1170.5" stroke="#000" stroke-width="1" fill="none"/><text x="1158.00" y="550.2" text-anchor="middle" font-family="Liberation Sans" font-size="17">0</text><text x="1298.94" y="550.2" text-anchor="middle" font-family="Liberation Sans" font-size="17">5000</text><text x="1439.88" y="550.2" text-anchor="middle" font-family="Liberation Sans" font-size="17">10000</text><text x="1580.81" y="550.2" text-anchor="middle" font-family="Liberation Sans" font-size="17">15000</text><text x="1721.75" y="550.2" text-anchor="middle" font-family="Liberation Sans" font-size="17">20000</text><text x="1834.5" y="565.0" text-anchor="end" font-family="Liberation Sans" font-size="17">Energy [keV]</text><text x="1155.4" y="537.30" text-anchor="end" font-family="Liberation Sans" font-size="17">0</text><text x="1155.4" y="474.15" text-anchor="end" font-family="Liberation Sans" font-size="17">0.5</text><text x="1155.4" y="411.00" text-anchor="end" font-family="Liberation Sans" font-size="17">1</text><text x="1155.4" y="347.85" text-anchor="end" font-family="Liberation Sans" font-size="17">1.5</text><text x="1155.4" y="284.70" text-anchor="end" font-family="Liberation Sans" font-size="17">2</text><text x="1155.4" y="221.55" text-anchor="end" font-family="Liberation Sans" font-size="17">2.5</text><text x="1155.4" y="158.40" text-anchor="end" font-family="Liberation Sans" font-size="17">3</text><text transform="translate(1111,134.5) rotate(-90)" text-anchor="end" font-family="Liberation Sans" font-size="17">Counts</text><rect x="1733.5" y="117.5" width="169.0" height="79.5" fill="#fff" stroke="#000" stroke-width="1"/><path d="M1733.5,133.4H1902.5" stroke="#000" stroke-width="1"/><text transform="translate(1818.00,129.40) scale(1.065,1)" text-anchor="middle" font-family="Liberation Sans" font-size="12.6">lowEnergyEyRateD...</text><text transform="translate(1741.80,144.80) scale(1.065,1)" font-family="Liberation Sans" font-size="12.6">Entries</text><text transform="translate(1894.30,144.80) scale(1.065,1)" text-anchor="end" font-family="Liberation Sans" font-size="12.6">62</text><text transform="translate(1741.80,160.70) scale(1.065,1)" font-family="Liberation Sans" font-size="12.6">Mean</text><text transform="translate(1894.30,160.70) scale(1.065,1)" text-anchor="end" font-family="Liberation Sans" font-size="12.6">1780</text><text transform="translate(1741.80,175.80) scale(1.065,1)" font-family="Liberation Sans" font-size="12.6">Std Dev</text><text transform="translate(1894.30,175.80) scale(1.065,1)" text-anchor="end" font-family="Liberation Sans" font-size="12.6">1158</text><text transform="translate(1741.80,192.30) scale(1.065,1)" font-family="Liberation Sans" font-size="12.6">Integral</text><text transform="translate(1894.30,192.30) scale(1.065,1)" text-anchor="end" font-family="Liberation Sans" font-size="12.6">62</text><rect x="1078" y="567" width="10" height="10" fill="#b6c8e6"/><rect x="312" y="631.5" width="676.5" height="397.5" fill="#fff"/><path d="M326.20,1029.00V1008.00H328.86V1029.00H329.21V997.50H329.92V1029.00H330.27V997.50H330.71V1029.00H331.06V997.50H331.76V1029.00H332.11V997.50H334.66V1029.00H335.01V997.50H336.78V1029.00H337.13V1018.50H337.30V1029.00H337.65V1018.50H337.80V1008.00H339.41V1029.00H339.76V1008.00H339.90V1018.50H341.00V1029.00H341.35V1018.50H343.10V997.50H343.11V1029.00H343.46V997.50H343.90V1029.00H344.25V1018.50H344.69V1029.00H345.04V1018.50H345.20V1008.00H345.22V1029.00H345.57V1008.00H347.86V1029.00H348.21V1018.50H348.90V1008.00H348.91V1029.00H349.26V1008.00H350.76V1029.00H351.11V1018.50H352.08V1029.00H352.43V997.50H353.10V1018.50H353.13V1029.00H353.48V1018.50H354.72V1029.00H355.07V1018.50H355.77V1029.00H356.12V1018.50H357.36V1029.00H357.71V1008.00H358.40V987.00H358.41V1029.00H358.76V987.00H361.58V1029.00H361.93V1018.50H363.16V1029.00H364.20V1008.00H364.22V1029.00H364.57V1008.00H365.27V1029.00H365.62V1008.00H366.30V1018.50H366.33V1029.00H366.68V1018.50H367.90V1008.00H367.91V1029.00H368.26V1008.00H369.76V1029.00H370.11V1018.50H371.60V1029.00H371.95V1018.50H372.66V1029.00H373.01V1018.50H374.24V1029.00H374.59V1018.50H375.30V1029.00H375.65V1018.50H376.35V1029.00H376.70V1018.50H377.90V1008.00H377.94V1029.00H378.29V1008.00H378.99V1029.00H379.34V1018.50H380.05V1029.00H380.40V1018.50H382.16V1029.00H382.51V997.50H384.50V1018.50H384.53V1029.00H384.88V1018.50H385.85V1029.00H389.50V1008.00H389.55V1029.00H389.90V1008.00H391.60V1018.50H394.70V1029.00H398.00V1018.50H398.44V1029.00H398.79V1018.50H399.23V1029.00H399.58V1018.50H401.08V1029.00H403.81V1018.50H404.80V1029.00H407.24V1018.50H407.94V1029.00H408.29V1018.50H409.00V1029.00H409.35V1018.50H410.05V1029.00H410.40V1018.50H411.11V1029.00H411.46V1018.50H412.70V1029.00H415.00V1018.50H415.07V1029.00H415.42V1018.50H415.86V1029.00H416.21V1018.50H418.50V1029.00H424.12V1018.50H424.83V1029.00H425.18V1018.50H425.88V1029.00H426.23V1018.50H426.94V1029.00H427.29V1018.50H427.99V1029.00H428.34V1018.50H429.05V1029.00H429.40V1018.50H430.63V1029.00H430.98V1018.50H431.70V1029.00H434.15V1008.00H434.85V1029.00H435.20V1008.00H435.91V1029.00H436.26V1008.00H436.97V1029.00H437.32V1018.50H438.00V1008.00H438.02V1029.00H438.37V1008.00H439.08V1029.00H439.43V1008.00H440.13V1029.00H440.48V1008.00H441.20V987.00H442.20V945.00H443.30V840.00H444.30V819.00H445.30V850.50H446.30V735.00H447.30V651.00H448.30V735.00H449.20V777.00H450.10V787.50H451.20V997.50H452.80V1008.00H454.60V1029.00H456.00V1018.50H457.80V1029.00" fill="none" stroke="#000099" stroke-width="1"/><rect x="312" y="631.5" width="676.5" height="397.5" fill="none" stroke="#000" stroke-width="1.2"/><path d="M312.00,1029V1014M340.19,1029V1021M368.38,1029V1021M396.56,1029V1021M424.75,1029V1021M452.94,1029V1014M481.12,1029V1021M509.31,1029V1021M537.50,1029V1021M565.69,1029V1021M593.88,1029V1014M622.06,1029V1021M650.25,1029V1021M678.44,1029V1021M706.62,1029V1021M734.81,1029V1014M763.00,1029V1021M791.19,1029V1021M819.38,1029V1021M847.56,1029V1021M875.75,1029V1014M903.94,1029V1021M932.12,1029V1021M960.31,1029V1021M988.50,1029V1021M312,1029.00H336.5M312,976.50H336.5M312,924.00H336.5M312,871.50H336.5M312,819.00H336.5M312,766.50H336.5M312,714.00H336.5M312,661.50H336.5M312,1018.50H324.5M312,1008.00H324.5M312,997.50H324.5M312,987.00H324.5M312,966.00H324.5M312,955.50H324.5M312,945.00H324.5M312,934.50H324.5M312,913.50H324.5M312,903.00H324.5M312,892.50H324.5M312,882.00H324.5M312,861.00H324.5M312,850.50H324.5M312,840.00H324.5M312,829.50H324.5M312,808.50H324.5M312,798.00H324.5M312,787.50H324.5M312,777.00H324.5M312,756.00H324.5M312,745.50H324.5M312,735.00H324.5M312,724.50H324.5M312,703.50H324.5M312,693.00H324.5M312,682.50H324.5M312,672.00H324.5M312,651.00H324.5M312,640.50H324.5" stroke="#000" stroke-width="1" fill="none"/><text x="312.00" y="1047.2" text-anchor="middle" font-family="Liberation Sans" font-size="17">0</text><text x="452.94" y="1047.2" text-anchor="middle" font-family="Liberation Sans" font-size="17">5000</text><text x="593.88" y="1047.2" text-anchor="middle" font-family="Liberation Sans" font-size="17">10000</text><text x="734.81" y="1047.2" text-anchor="middle" font-family="Liberation Sans" font-size="17">15000</text><text x="875.75" y="1047.2" text-anchor="middle" font-family="Liberation Sans" font-size="17">20000</text><text x="988.5" y="1062.0" text-anchor="end" font-family="Liberation Sans" font-size="17">Energy [keV]</text><text x="309.4" y="1034.30" text-anchor="end" font-family="Liberation Sans" font-size="17">0</text><text x="309.4" y="981.80" text-anchor="end" font-family="Liberation Sans" font-size="17">5</text><text x="309.4" y="929.30" text-anchor="end" font-family="Liberation Sans" font-size="17">10</text><text x="309.4" y="876.80" text-anchor="end" font-family="Liberation Sans" font-size="17">15</text><text x="309.4" y="824.30" text-anchor="end" font-family="Liberation Sans" font-size="17">20</text><text x="309.4" y="771.80" text-anchor="end" font-family="Liberation Sans" font-size="17">25</text><text x="309.4" y="719.30" text-anchor="end" font-family="Liberation Sans" font-size="17">30</text><text x="309.4" y="666.80" text-anchor="end" font-family="Liberation Sans" font-size="17">35</text><text transform="translate(265,631.5) rotate(-90)" text-anchor="end" font-family="Liberation Sans" font-size="17">Counts</text><rect x="887.5" y="614.5" width="169.0" height="79.5" fill="#fff" stroke="#000" stroke-width="1"/><path d="M887.5,630.4H1056.5" stroke="#000" stroke-width="1"/><text transform="translate(972.00,626.40) scale(1.065,1)" text-anchor="middle" font-family="Liberation Sans" font-size="12.6">lowEnergyEyRateD...</text><text transform="translate(895.80,641.80) scale(1.065,1)" font-family="Liberation Sans" font-size="12.6">Entries</text><text transform="translate(1048.30,641.80) scale(1.065,1)" text-anchor="end" font-family="Liberation Sans" font-size="12.6">463</text><text transform="translate(895.80,657.70) scale(1.065,1)" font-family="Liberation Sans" font-size="12.6">Mean</text><text transform="translate(1048.30,657.70) scale(1.065,1)" text-anchor="end" font-family="Liberation Sans" font-size="12.6">3948</text><text transform="translate(895.80,672.80) scale(1.065,1)" font-family="Liberation Sans" font-size="12.6">Std Dev</text><text transform="translate(1048.30,672.80) scale(1.065,1)" text-anchor="end" font-family="Liberation Sans" font-size="12.6">1453</text><text transform="translate(895.80,689.30) scale(1.065,1)" font-family="Liberation Sans" font-size="12.6">Integral</text><text transform="translate(1048.30,689.30) scale(1.065,1)" text-anchor="end" font-family="Liberation Sans" font-size="12.6">463</text><rect x="232" y="1064" width="10" height="10" fill="#b6c8e6"/><rect x="1158" y="631.5" width="676.5" height="397.5" fill="#fff"/><clipPath id="fc4"><rect x="1158" y="631.5" width="676.5" height="397.5"/></clipPath><path clip-path="url(#fc4)" d="M1164.60,1034.00V972.70H1165.80V874.99H1167.00V842.41H1168.00V814.47H1169.70V803.02H1170.40V848.69H1171.60V888.50H1172.70V921.08H1174.10V661.62H1175.40V634.35H1176.70V665.54H1177.60V808.40H1178.50V842.41H1179.70V831.93H1180.80V860.02H1182.00V874.99H1183.10V848.69H1184.30V881.26H1185.50V907.56H1186.60V848.69H1187.80V897.07H1189.00V855.93H1190.00V888.50H1191.25V860.02H1192.40V819.60H1193.50V797.06H1195.90V855.93H1197.00V907.56H1198.20V864.50H1199.40V940.13H1200.50V972.70H1201.70V881.26H1202.80V940.13H1204.00V897.07H1205.10V972.70H1206.30V874.99H1207.50V1034.00H1208.60V921.08H1209.80V874.99H1211.40V817.83H1213.20V860.02H1214.40V907.56H1215.60V972.70H1216.70V907.56H1217.90V897.07H1219.00V972.70H1220.20V921.08H1221.30V907.56H1222.50V940.13H1223.70V921.08H1224.80V972.70H1226.00V921.08H1227.00V1034.00H1228.30V921.08H1229.40V888.50H1230.60V972.70H1231.80V1034.00H1232.90V940.13H1234.00V1034.00H1236.00V940.13H1237.50V972.70H1239.00V940.13H1240.60V1034.00H1244.10V921.08H1245.30V940.13H1246.40V1034.00H1248.00V907.56H1249.40V1034.00H1250.00V972.70H1250.80V1034.00H1251.10V972.70H1252.00V1034.00H1253.00V972.70H1254.20V1034.00H1254.50V972.70H1256.00V1034.00H1256.30V972.70H1256.50V1034.00H1257.50V972.70H1257.80V1034.00H1258.10V972.70H1259.00V940.13H1260.80V1034.00H1261.10V940.13H1261.50V972.70H1262.60V940.13H1264.30V1034.00H1264.60V940.13H1265.00V972.70H1266.00V1034.00H1267.00V972.70H1268.20V1034.00H1268.50V972.70H1269.00V1034.00H1270.70V921.08H1271.90V1034.00H1274.00V972.70H1275.00V1034.00H1275.30V972.70H1276.00V1034.00H1277.00V972.70H1278.30V1034.00H1278.60V972.70H1279.00V1034.00H1280.00V972.70H1280.60V1034.00H1280.90V972.70H1282.30V1034.00H1283.50V921.08H1284.60V940.13H1285.80V897.07H1288.10V940.13H1289.20V869.45H1290.40V852.17H1291.60V864.50H1292.70V839.57H1293.90V869.45H1295.00V864.50H1296.20V845.45H1297.30V907.56H1298.50V869.45H1299.70V888.50H1300.80V897.07H1302.00V940.13H1303.10V972.70H1304.30V940.13H1305.40V972.70H1307.80V1034.00" fill="none" stroke="#000099" stroke-width="1"/><rect x="1158" y="631.5" width="676.5" height="397.5" fill="none" stroke="#000" stroke-width="1.2"/><path d="M1158.00,1029V1014M1186.19,1029V1021M1214.38,1029V1021M1242.56,1029V1021M1270.75,1029V1021M1298.94,1029V1014M1327.12,1029V1021M1355.31,1029V1021M1383.50,1029V1021M1411.69,1029V1021M1439.88,1029V1014M1468.06,1029V1021M1496.25,1029V1021M1524.44,1029V1021M1552.62,1029V1021M1580.81,1029V1014M1609.00,1029V1021M1637.19,1029V1021M1665.38,1029V1021M1693.56,1029V1021M1721.75,1029V1014M1749.94,1029V1021M1778.12,1029V1021M1806.31,1029V1021M1834.50,1029V1021M1158,972.70H1182.5M1158,864.50H1182.5M1158,756.30H1182.5M1158,648.10H1182.5M1158,1015.76H1170.5M1158,1005.27H1170.5M1158,996.70H1170.5M1158,989.46H1170.5M1158,983.19H1170.5M1158,977.65H1170.5M1158,940.13H1170.5M1158,921.08H1170.5M1158,907.56H1170.5M1158,897.07H1170.5M1158,888.50H1170.5M1158,881.26H1170.5M1158,874.99H1170.5M1158,869.45H1170.5M1158,831.93H1170.5M1158,812.88H1170.5M1158,799.36H1170.5M1158,788.87H1170.5M1158,780.30H1170.5M1158,773.06H1170.5M1158,766.79H1170.5M1158,761.25H1170.5M1158,723.73H1170.5M1158,704.68H1170.5M1158,691.16H1170.5M1158,680.67H1170.5M1158,672.10H1170.5M1158,664.86H1170.5M1158,658.59H1170.5M1158,653.05H1170.5" stroke="#000" stroke-width="1" fill="none"/><text x="1158.00" y="1047.2" text-anchor="middle" font-family="Liberation Sans" font-size="17">0</text><text x="1298.94" y="1047.2" text-anchor="middle" font-family="Liberation Sans" font-size="17">5000</text><text x="1439.88" y="1047.2" text-anchor="middle" font-family="Liberation Sans" font-size="17">10000</text><text x="1580.81" y="1047.2" text-anchor="middle" font-family="Liberation Sans" font-size="17">15000</text><text x="1721.75" y="1047.2" text-anchor="middle" font-family="Liberation Sans" font-size="17">20000</text><text x="1834.5" y="1062.0" text-anchor="end" font-family="Liberation Sans" font-size="17">Energy [keV]</text><text x="1149.1" y="980.80" text-anchor="end" font-family="Liberation Sans" font-size="17">10</text><text x="1150.2" y="973.90" text-anchor="start" font-family="Liberation Sans" font-size="10.5">0</text><text x="1149.1" y="872.60" text-anchor="end" font-family="Liberation Sans" font-size="17">10</text><text x="1150.2" y="865.70" text-anchor="start" font-family="Liberation Sans" font-size="10.5">1</text><text x="1149.1" y="764.40" text-anchor="end" font-family="Liberation Sans" font-size="17">10</text><text x="1150.2" y="757.50" text-anchor="start" font-family="Liberation Sans" font-size="10.5">2</text><text x="1149.1" y="656.20" text-anchor="end" font-family="Liberation Sans" font-size="17">10</text><text x="1150.2" y="649.30" text-anchor="start" font-family="Liberation Sans" font-size="10.5">3</text><text transform="translate(1111,631.5) rotate(-90)" text-anchor="end" font-family="Liberation Sans" font-size="17">Counts</text><rect x="1733.5" y="614.5" width="169.0" height="79.5" fill="#fff" stroke="#000" stroke-width="1"/><path d="M1733.5,630.4H1902.5" stroke="#000" stroke-width="1"/><text transform="translate(1818.00,626.40) scale(1.0,1)" text-anchor="middle" font-family="Liberation Sans" font-size="12.6">lowEnergyEyRateDSSD3</text><text transform="translate(1741.80,641.70) scale(1.0,1)" font-family="Liberation Sans" font-size="12.6">Entries</text><text transform="translate(1894.30,641.70) scale(1.0,1)" text-anchor="end" font-family="Liberation Sans" font-size="12.6">5013</text><text transform="translate(1741.80,657.80) scale(1.0,1)" font-family="Liberation Sans" font-size="12.6">Mean</text><text transform="translate(1894.30,657.80) scale(1.0,1)" text-anchor="end" font-family="Liberation Sans" font-size="12.6">949.8</text><text transform="translate(1741.80,672.70) scale(1.0,1)" font-family="Liberation Sans" font-size="12.6">Std Dev</text><text transform="translate(1894.30,672.70) scale(1.0,1)" text-anchor="end" font-family="Liberation Sans" font-size="12.6">954.0</text><text transform="translate(1741.80,688.90) scale(1.0,1)" font-family="Liberation Sans" font-size="12.6">Integral</text><text transform="translate(1894.30,688.90) scale(1.0,1)" text-anchor="end" font-family="Liberation Sans" font-size="12.6">5013</text><rect x="1078" y="1064" width="10" height="10" fill="#b6c8e6"/></svg>
</div></body></html>
